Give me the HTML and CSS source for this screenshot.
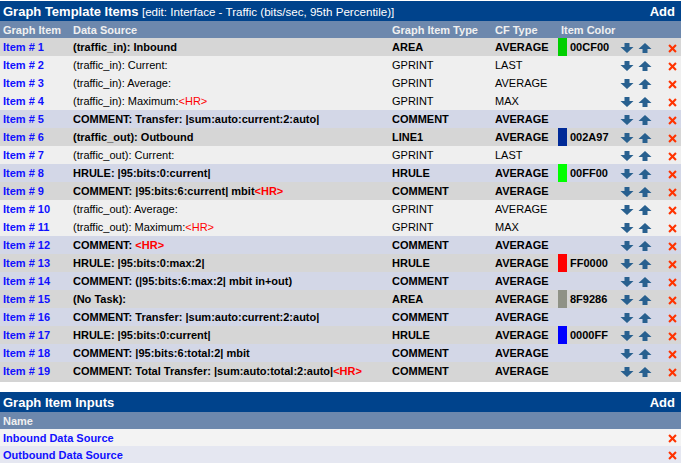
FILE: index.html
```html
<!DOCTYPE html>
<html>
<head>
<meta charset="utf-8">
<link rel="stylesheet" href="styles.css">
</head>
<body>
<svg width="0" height="0" class="defs">
  <defs>
    <symbol id="dn" viewBox="0 0 13 10"><path d="M4 0h5v4h4l-6.5 6l-6.5-6h4z"/></symbol>
    <symbol id="up" viewBox="0 0 13 10"><path d="M6.5 0l6.5 6h-4v4h-5v-4h-4z"/></symbol>
    <symbol id="del" viewBox="0 0 9 9"><path d="M0.3 1.8L1.8 0.3L4.5 3L7.2 0.3L8.7 1.8L6 4.5L8.7 7.2L7.2 8.7L4.5 6L1.8 8.7L0.3 7.2L3 4.5z"/></symbol>
  </defs>
</svg>
<div class="panel">
  <div class="titlebar"><span><b>Graph Template Items</b> <span class="edit">[edit: Interface - Traffic (bits/sec, 95th Percentile)]</span></span><b>Add</b></div>
  <table class="items">
    <colgroup><col class="c1"><col class="c2"><col class="c3"><col class="c4"><col class="c5"><col class="c6"><col class="c7"></colgroup>
    <tr class="head"><th>Graph Item</th><th>Data Source</th><th>Graph Item Type</th><th>CF Type</th><th class="hcolor">Item Color</th><th></th><th></th></tr>
    <tr class="g b"><td class="it">Item # 1</td><td>(traffic_in): Inbound</td><td>AREA</td><td>AVERAGE</td><td><span class="sw" style="background:#00CF00"></span>00CF00</td><td class="arr"><svg><use href="#dn"/></svg><svg><use href="#up"/></svg></td><td class="x"><svg><use href="#del"/></svg></td></tr>
    <tr class="l"><td class="it">Item # 2</td><td>(traffic_in): Current:</td><td>GPRINT</td><td>LAST</td><td></td><td class="arr"><svg><use href="#dn"/></svg><svg><use href="#up"/></svg></td><td class="x"><svg><use href="#del"/></svg></td></tr>
    <tr class="l"><td class="it">Item # 3</td><td>(traffic_in): Average:</td><td>GPRINT</td><td>AVERAGE</td><td></td><td class="arr"><svg><use href="#dn"/></svg><svg><use href="#up"/></svg></td><td class="x"><svg><use href="#del"/></svg></td></tr>
    <tr class="l"><td class="it">Item # 4</td><td>(traffic_in): Maximum:<span class="hr">&lt;HR&gt;</span></td><td>GPRINT</td><td>MAX</td><td></td><td class="arr"><svg><use href="#dn"/></svg><svg><use href="#up"/></svg></td><td class="x"><svg><use href="#del"/></svg></td></tr>
    <tr class="v b"><td class="it">Item # 5</td><td>COMMENT: Transfer: |sum:auto:current:2:auto|</td><td>COMMENT</td><td>AVERAGE</td><td></td><td class="arr"><svg><use href="#dn"/></svg><svg><use href="#up"/></svg></td><td class="x"><svg><use href="#del"/></svg></td></tr>
    <tr class="g b"><td class="it">Item # 6</td><td>(traffic_out): Outbound</td><td>LINE1</td><td>AVERAGE</td><td><span class="sw" style="background:#002A97"></span>002A97</td><td class="arr"><svg><use href="#dn"/></svg><svg><use href="#up"/></svg></td><td class="x"><svg><use href="#del"/></svg></td></tr>
    <tr class="l"><td class="it">Item # 7</td><td>(traffic_out): Current:</td><td>GPRINT</td><td>LAST</td><td></td><td class="arr"><svg><use href="#dn"/></svg><svg><use href="#up"/></svg></td><td class="x"><svg><use href="#del"/></svg></td></tr>
    <tr class="v b"><td class="it">Item # 8</td><td>HRULE: |95:bits:0:current|</td><td>HRULE</td><td>AVERAGE</td><td><span class="sw" style="background:#00FF00"></span>00FF00</td><td class="arr"><svg><use href="#dn"/></svg><svg><use href="#up"/></svg></td><td class="x"><svg><use href="#del"/></svg></td></tr>
    <tr class="g b"><td class="it">Item # 9</td><td>COMMENT: |95:bits:6:current| mbit<span class="hr">&lt;HR&gt;</span></td><td>COMMENT</td><td>AVERAGE</td><td></td><td class="arr"><svg><use href="#dn"/></svg><svg><use href="#up"/></svg></td><td class="x"><svg><use href="#del"/></svg></td></tr>
    <tr class="l"><td class="it">Item # 10</td><td>(traffic_out): Average:</td><td>GPRINT</td><td>AVERAGE</td><td></td><td class="arr"><svg><use href="#dn"/></svg><svg><use href="#up"/></svg></td><td class="x"><svg><use href="#del"/></svg></td></tr>
    <tr class="l"><td class="it">Item # 11</td><td>(traffic_out): Maximum:<span class="hr">&lt;HR&gt;</span></td><td>GPRINT</td><td>MAX</td><td></td><td class="arr"><svg><use href="#dn"/></svg><svg><use href="#up"/></svg></td><td class="x"><svg><use href="#del"/></svg></td></tr>
    <tr class="v b"><td class="it">Item # 12</td><td>COMMENT: <span class="hr">&lt;HR&gt;</span></td><td>COMMENT</td><td>AVERAGE</td><td></td><td class="arr"><svg><use href="#dn"/></svg><svg><use href="#up"/></svg></td><td class="x"><svg><use href="#del"/></svg></td></tr>
    <tr class="g b"><td class="it">Item # 13</td><td>HRULE: |95:bits:0:max:2|</td><td>HRULE</td><td>AVERAGE</td><td><span class="sw" style="background:#FF0000"></span>FF0000</td><td class="arr"><svg><use href="#dn"/></svg><svg><use href="#up"/></svg></td><td class="x"><svg><use href="#del"/></svg></td></tr>
    <tr class="v b"><td class="it">Item # 14</td><td>COMMENT: (|95:bits:6:max:2| mbit in+out)</td><td>COMMENT</td><td>AVERAGE</td><td></td><td class="arr"><svg><use href="#dn"/></svg><svg><use href="#up"/></svg></td><td class="x"><svg><use href="#del"/></svg></td></tr>
    <tr class="g b"><td class="it">Item # 15</td><td>(No Task):</td><td>AREA</td><td>AVERAGE</td><td><span class="sw" style="background:#8F9286"></span>8F9286</td><td class="arr"><svg><use href="#dn"/></svg><svg><use href="#up"/></svg></td><td class="x"><svg><use href="#del"/></svg></td></tr>
    <tr class="v b"><td class="it">Item # 16</td><td>COMMENT: Transfer: |sum:auto:current:2:auto|</td><td>COMMENT</td><td>AVERAGE</td><td></td><td class="arr"><svg><use href="#dn"/></svg><svg><use href="#up"/></svg></td><td class="x"><svg><use href="#del"/></svg></td></tr>
    <tr class="g b"><td class="it">Item # 17</td><td>HRULE: |95:bits:0:current|</td><td>HRULE</td><td>AVERAGE</td><td><span class="sw" style="background:#0000FF"></span>0000FF</td><td class="arr"><svg><use href="#dn"/></svg><svg><use href="#up"/></svg></td><td class="x"><svg><use href="#del"/></svg></td></tr>
    <tr class="v b"><td class="it">Item # 18</td><td>COMMENT: |95:bits:6:total:2| mbit</td><td>COMMENT</td><td>AVERAGE</td><td></td><td class="arr"><svg><use href="#dn"/></svg><svg><use href="#up"/></svg></td><td class="x"><svg><use href="#del"/></svg></td></tr>
    <tr class="g b"><td class="it">Item # 19</td><td>COMMENT: Total Transfer: |sum:auto:total:2:auto|<span class="hr">&lt;HR&gt;</span></td><td>COMMENT</td><td>AVERAGE</td><td></td><td class="arr"><svg><use href="#dn"/></svg><svg><use href="#up"/></svg></td><td class="x"><svg><use href="#del"/></svg></td></tr>
  </table>
</div>
<div class="panel second">
  <div class="titlebar"><span><b>Graph Item Inputs</b></span><b>Add</b></div>
  <table class="inputs">
    <tr class="head"><th>Name</th><th></th></tr>
    <tr class="p1"><td class="it">Inbound Data Source</td><td class="x"><svg><use href="#del"/></svg></td></tr>
    <tr class="p2"><td class="it">Outbound Data Source</td><td class="x"><svg><use href="#del"/></svg></td></tr>
  </table>
</div>
</body>
</html>
```

FILE: styles.css
```css
html, body { margin: 0; padding: 0; background: #fff; }
body {
  padding-top: 1px;
  width: 681px;
  font-family: "Liberation Sans", Arial, sans-serif;
  font-size: 11px;
  color: #000;
}
.defs { position: absolute; }
.panel { border-bottom: 2px solid #d4d4d4; }
.panel.second { margin-top: 10px; border-bottom: none; }
.titlebar {
  height: 20px;
  background: #00438c;
  color: #fff;
  display: flex;
  justify-content: space-between;
  align-items: center;
  padding: 0 6px 0 3px;
  font-size: 12px;
}
.titlebar b { font-weight: bold; font-size: 13px; }
.titlebar .edit { font-size: 11.6px; }
table { width: 100%; border-collapse: collapse; table-layout: fixed; }
col.c1 { width: 70px; }
col.c2 { width: 319px; }
col.c3 { width: 103px; }
col.c4 { width: 63px; }
col.c5 { width: 62px; }
col.c6 { width: 44px; }
col.c7 { width: 20px; }
th, td { padding: 0 0 0 3px; white-space: nowrap; text-align: left; }
tr.head { height: 17px; background: #6d88ad; color: #f0f0f0; }
tr.head th { font-weight: bold; padding-top: 0; }
th.hcolor { padding-left: 6px; }
.items tr:not(.head) { height: 18px; }
.inputs tr:not(.head) { height: 17px; }
tr.b td { font-weight: bold; }
tr.g { background: #d6d6d6; }
tr.l { background: #efefef; }
tr.v { background: #d3d7e7; }
tr.p1 { background: #f3f3f3; }
tr.p2 { background: #e5e7f1; }
td.it { color: #1010ff; font-weight: bold; }
.hr { color: #ff0000; font-weight: normal; }
tr.b .hr { font-weight: bold; }
.sw { display: inline-block; width: 9px; height: 18px; vertical-align: top; margin-right: 3px; }
tr td:nth-child(5) { line-height: 18px; padding-top: 0; }
td.arr { padding-left: 3px; }
td.arr svg { width: 14px; height: 10px; fill: #28608f; vertical-align: middle; margin-right: 4px; }
td.x { text-align: right; padding-right: 4px; }
td.x svg { width: 9px; height: 9px; fill: #ff3300; vertical-align: middle; }
```
